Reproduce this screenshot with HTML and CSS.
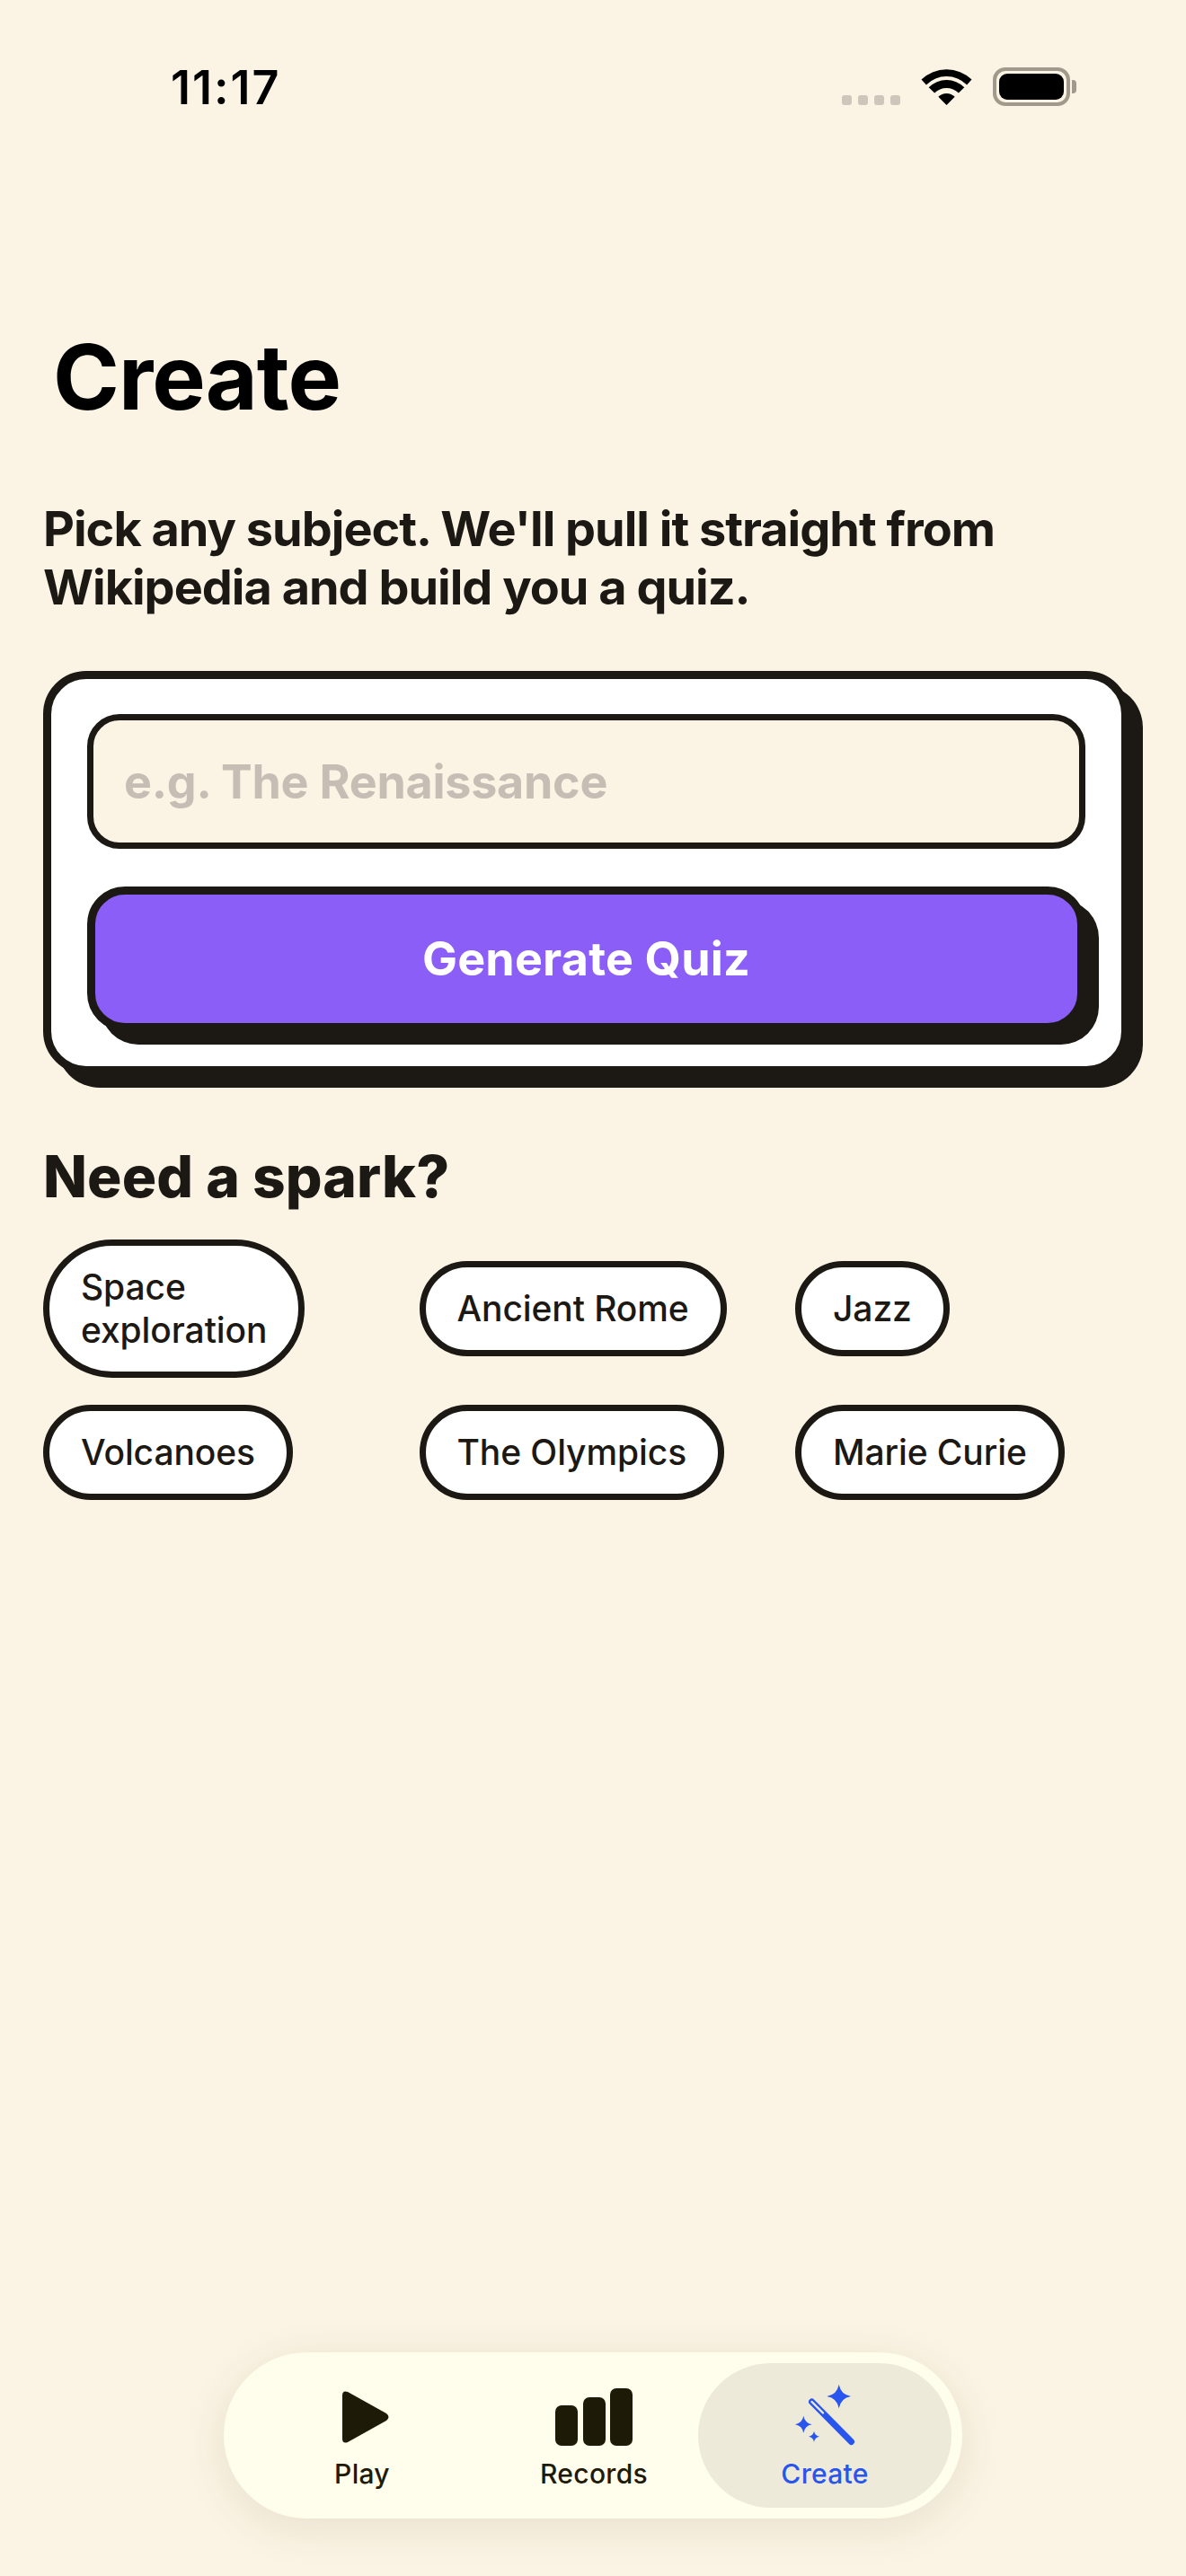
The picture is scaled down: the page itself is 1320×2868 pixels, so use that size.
FILE: index.html
```html
<!DOCTYPE html>
<html lang="en">

<head>
    <meta charset="UTF-8">
    <meta name="viewport" content="width=device-width, initial-scale=1.0">
    <title>Create</title>
    <link rel="stylesheet" href="styles.css">
</head>

<body>

    <div class="status-bar">
        <span class="status-time">11:17</span>
        <div class="status-icons">
            <div class="signal-dots">
                <span></span><span></span><span></span><span></span>
            </div>
            <svg class="wifi-icon" width="57" height="42" viewBox="0 0 57 42">
                <path d="M0.5 13.5A40.5 40.5 0 0 1 56.5 13.5L51.1 19.4A32 32 0 0 0 5.9 19.4Z" />
                <path d="M8.7 22.2A28 28 0 0 1 48.3 22.2L41.9 28.6A19 19 0 0 0 15.1 28.6Z" />
                <path d="M19.3 32.8A13 13 0 0 1 37.7 32.8L28.5 42Z" />
            </svg>
            <div class="battery">
                <div class="battery-fill"></div>
            </div>
            <div class="battery-nub"></div>
        </div>
    </div>

    <div class="container">
        <h1 class="page-title">Create</h1>
        <p class="intro">Pick any subject. We'll pull it straight from<br>Wikipedia and build you a quiz.</p>

        <form class="create-card">
            <input class="topic-input" type="text" placeholder="e.g. The Renaissance">
            <button class="generate-button" type="button">Generate Quiz</button>
        </form>

        <h2 class="spark-title">Need a spark?</h2>
        <div class="chip-grid">
            <button class="chip" type="button">Space<br>exploration</button>
            <button class="chip" type="button">Ancient Rome</button>
            <button class="chip" type="button">Jazz</button>
            <button class="chip" type="button">Volcanoes</button>
            <button class="chip" type="button">The Olympics</button>
            <button class="chip" type="button">Marie Curie</button>
        </div>
    </div>

    <nav class="tab-bar">
        <a class="tab">
            <svg class="tab-icon" width="60" height="68" viewBox="0 0 60 68">
                <path d="M8 12Q8 6 14 8L57 32Q62 36 57 40L14 64Q8 66 8 60Z" />
            </svg>
            <span>Play</span>
        </a>
        <a class="tab">
            <svg class="tab-icon" width="86" height="68" viewBox="0 0 86 68">
                <rect x="0" y="23" width="25" height="45" rx="7" />
                <rect x="31" y="14" width="25" height="54" rx="7" />
                <rect x="61" y="4" width="25" height="64" rx="7" />
            </svg>
            <span>Records</span>
        </a>
        <a class="tab tab-active">
            <svg class="tab-icon" width="67" height="68" viewBox="0 0 67 68">
                <path d="M48.7 -.3Q50.7 11 62 13Q50.7 15 48.7 26.3Q46.7 15 35.4 13Q46.7 11 48.7 -.3Z" />
                <path d="M9.3 34.8Q10.7 42.9 18.8 44.3Q10.7 45.7 9.3 53.8Q7.9 45.7 -.2 44.3Q7.9 42.9 9.3 34.8Z" />
                <path d="M21 51.7Q21.9 56.8 27 57.7Q21.9 58.6 21 63.7Q20.1 58.6 15 57.7Q20.1 56.8 21 51.7Z" />
                <line class="wand" x1="18.5" y1="19" x2="62.5" y2="63.5" />
                <line class="wand-tip" x1="18.5" y1="19" x2="31" y2="31.5" />
            </svg>
            <span>Create</span>
        </a>
    </nav>

</body>

</html>
```

FILE: styles.css
```css
body {
    font-family: Inter, "Noto Sans", sans-serif;
    margin: 0;
    height: 100vh;
    display: flex;
    flex-direction: column;
    overflow: hidden;
    background-color: #fbf4e4;
    color: #1c1814;
}

.status-bar {
    display: flex;
    justify-content: space-between;
    align-items: flex-start;
    height: 360px;
    box-sizing: border-box;
    padding: 68px 122px 0 190px;
}

.status-time {
    font-size: 52px;
    font-weight: 600;
    letter-spacing: 2px;
    line-height: 60px;
    color: #000;
}

.status-icons {
    display: flex;
    align-items: flex-end;
    margin-top: 7px;
}

.signal-dots {
    display: flex;
    gap: 7px;
    margin-right: 23px;
    margin-bottom: 1px;
}

.signal-dots span {
    width: 11px;
    height: 11px;
    border-radius: 3px;
    background-color: #cdc6bb;
}

.wifi-icon {
    fill: #000;
    margin-right: 23px;
    margin-bottom: 1px;
}

.battery {
    box-sizing: border-box;
    width: 86px;
    height: 43px;
    padding: 3px;
    border: 4px solid #a09a8d;
    border-radius: 14px;
}

.battery-fill {
    height: 100%;
    border-radius: 9px;
    background-color: #000;
}

.battery-nub {
    width: 5px;
    height: 15px;
    margin: 0 0 14px 2px;
    border-radius: 0 4px 4px 0;
    background-color: #a09a8d;
}

.container {
    display: flex;
    flex-direction: column;
    align-items: flex-start;
    padding: 0 48px;
}

.page-title {
    margin: 0 0 76px 11px;
    font-size: 100px;
    font-weight: 700;
    letter-spacing: -1px;
    line-height: 120px;
    color: #000;
}

.intro {
    margin: 0 0 61px;
    font-size: 54px;
    font-weight: 700;
    letter-spacing: -1px;
    line-height: 65px;
}

.create-card {
    box-sizing: border-box;
    width: 1209px;
    height: 449px;
    padding: 39px 40px;
    display: flex;
    flex-direction: column;
    gap: 42px;
    background-color: #fff;
    border: 9px solid #1c1814;
    border-radius: 48px;
    box-shadow: 15px 15px 0 #1c1814;
}

.topic-input {
    box-sizing: border-box;
    width: 100%;
    height: 150px;
    padding: 0 34px;
    font-family: inherit;
    font-size: 52px;
    font-weight: 700;
    letter-spacing: -0.25px;
    color: #1c1814;
    background-color: #fbf4e4;
    border: 7px solid #1c1814;
    border-radius: 36px;
    outline: none;
}

.topic-input::placeholder {
    color: #c6bdb5;
    opacity: 1;
}

.generate-button {
    box-sizing: border-box;
    width: 100%;
    height: 161px;
    font-family: inherit;
    font-size: 52px;
    font-weight: 700;
    letter-spacing: 0.2px;
    color: #fff;
    background-color: #8b5ff7;
    border: 9px solid #1c1814;
    border-radius: 42px;
    box-shadow: 15px 15px 0 #1c1814;
}

.spark-title {
    margin: 76px 0 33px;
    font-size: 64px;
    font-weight: 800;
    letter-spacing: 0.1px;
    line-height: 75px;
}

.chip-grid {
    display: grid;
    grid-template-columns: repeat(3, 388px);
    gap: 30px 30.5px;
    align-items: center;
    justify-items: start;
}

.chip {
    box-sizing: border-box;
    padding: 22px 35px;
    font-family: inherit;
    font-size: 39px;
    font-weight: 500;
    letter-spacing: -0.1px;
    line-height: 48px;
    text-align: left;
    color: #1c1814;
    background-color: #fff;
    border: 7px solid #1c1814;
    border-radius: 999px;
}

.tab-bar {
    box-sizing: border-box;
    align-self: center;
    display: flex;
    width: 822px;
    height: 185px;
    margin-top: auto;
    margin-bottom: 64px;
    padding: 12px 0 12px 25px;
    background-color: #fffdeb;
    border-radius: 93px;
    box-shadow: 0 10px 50px rgba(70, 50, 20, 0.1);
}

.tab {
    box-sizing: border-box;
    width: 258px;
    padding-top: 24px;
    display: flex;
    flex-direction: column;
    align-items: center;
    font-size: 30px;
    font-weight: 500;
    letter-spacing: 0.3px;
    line-height: 36px;
    color: #1e1a08;
}

.tab span {
    margin-top: 13px;
}

.tab-icon {
    display: block;
    fill: #1e1a08;
}

.tab-active {
    width: 282px;
    margin-left: -13px;
    color: #2855ee;
    background-color: #eeead9;
    border-radius: 81px;
}

.tab-active .tab-icon {
    fill: #2855ee;
}

.wand {
    stroke: #2855ee;
    stroke-width: 7;
    stroke-linecap: round;
}

.wand-tip {
    stroke: #eeead9;
    stroke-width: 2.4;
    stroke-linecap: round;
}
```
